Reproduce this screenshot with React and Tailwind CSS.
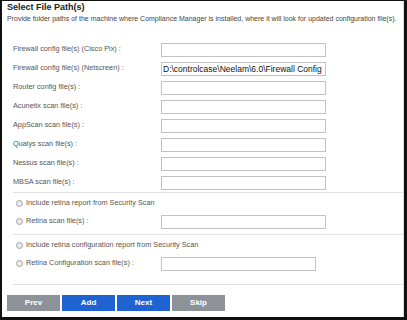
import React from 'react';

const fileFields = [
      'Firewall config file(s) (Cisco Pix) :',
      'Firewall config file(s) (Netscreen) :',
      'Router config file(s) :',
      'Acunetix scan file(s) :',
      'AppScan scan file(s) :',
      'Qualys scan file(s) :',
      'Nessus scan file(s) :',
      'MBSA scan file(s) :',
];

const Radio = () => (
      <span className="inline-block w-[7px] h-[7px] rounded-full border border-[#a3a3a3] bg-[#ececec] shrink-0"></span>
);

const PathInput = ({ value, width = 'w-[165px]' }) => (
      <input
            readOnly
            value={value || ''}
            className={`${width} h-[14px] border border-[#c2c2c2] bg-white px-[1px] text-[8.5px] text-[#111] outline-none leading-[12px]`}
      />
);

const App = () => {
      return (
            <div className="w-[407px] h-[320px] bg-[#111] pt-[1px] pl-[2px] pr-[3px] pb-[3px] box-border" style={{ fontFamily: '"Liberation Sans", Arial, sans-serif' }}>
                  <div className="w-full h-full bg-white border-r border-[#dcdcdc] flex flex-col">
                        <div className="pl-[5px]">
                              <h1 className="text-[9px] leading-[12px] font-bold text-[#222]">Select File Path(s)</h1>
                              <p className="mt-[1px] text-[7px] leading-[10px] text-[#444] whitespace-nowrap">Provide folder paths of the machine where Compliance Manager is installed, where it will look for updated configuration file(s).</p>
                        </div>

                        <div className="mt-[16px]">
                              {fileFields.map((label, i) => (
                                    <div key={label} className="flex items-center h-[19px] pl-[11px]">
                                          <span className="w-[148px] text-[7.3px] text-[#555]">{label}</span>
                                          <PathInput value={i === 1 ? 'D:\\controlcase\\Neelam\\6.0\\Firewall Config' : ''} />
                                    </div>
                              ))}
                        </div>

                        <div className="ml-[11px] h-px bg-[#e2e2e2]"></div>

                        <div className="flex items-center h-[20px] pl-[14px] gap-[3px]">
                              <Radio />
                              <span className="text-[7.3px] text-[#555]">Include retina report from Security Scan</span>
                        </div>
                        <div className="flex items-center h-[17px] pl-[14px]">
                              <div className="w-[145px] flex items-center gap-[3px]">
                                    <Radio />
                                    <span className="text-[7.3px] text-[#555]">Retina scan file(s) :</span>
                              </div>
                              <PathInput />
                        </div>

                        <div className="mt-[4px] ml-[11px] h-px bg-[#e2e2e2]"></div>

                        <div className="flex items-center h-[20px] pl-[14px] gap-[3px]">
                              <Radio />
                              <span className="text-[7.3px] text-[#555]">Include retina configuration report from Security Scan</span>
                        </div>
                        <div className="flex items-center h-[17px] pl-[14px]">
                              <div className="w-[145px] flex items-center gap-[3px]">
                                    <Radio />
                                    <span className="text-[7.3px] text-[#555]">Retina Configuration scan file(s) :</span>
                              </div>
                              <PathInput width="w-[155px]" />
                        </div>

                        <div className="mt-[12px] ml-[11px] h-px bg-[#e2e2e2]"></div>

                        <div className="mt-[10px] pl-[5px] flex gap-[2px]">
                              <button className="w-[53px] h-[16px] bg-[#8d9298] text-white text-[8px] font-bold">Prev</button>
                              <button className="w-[53px] h-[16px] bg-[#1f63d1] text-white text-[8px] font-bold">Add</button>
                              <button className="w-[53px] h-[16px] bg-[#1f63d1] text-white text-[8px] font-bold">Next</button>
                              <button className="w-[53px] h-[16px] bg-[#8d9298] text-white text-[8px] font-bold">Skip</button>
                        </div>
                  </div>
            </div>
      );
};

export default App;
